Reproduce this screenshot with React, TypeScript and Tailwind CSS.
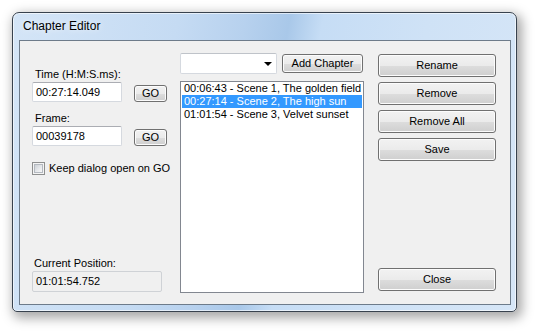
export default function App() {
  const btn =
    "flex items-center justify-center rounded-[3px] border border-[#707070] bg-[linear-gradient(#f2f2f2_0%,#ebebeb_50%,#dddddd_51%,#cfcfcf_100%)] shadow-[inset_0_0_0_1px_#fcfcfc] text-black text-[11px] leading-[13px]";
  const edit =
    "flex items-center h-[20px] rounded-[2px] border border-[#d5d9df] border-t-[#abadb3] bg-white pl-[3px] text-[11px] leading-[13px] text-black";
  return (
    <div className="w-[537px] h-[332px] bg-white pt-[12px] pl-[12px] font-['Liberation_Sans',Arial,sans-serif]">
      <div className="w-[505px] h-[300px] rounded-t-[7px] rounded-b-[5px] border border-[#38424e] bg-[linear-gradient(100deg,#d4e5f7_0%,#c5dbf3_30%,#b7d1ee_42%,#a9c8e9_50%,#c6ddf5_56%,#cfe2f6_75%,#d6e6f7_100%)] shadow-[inset_0_0_0_1px_rgba(255,255,255,0.6),3px_4px_12px_2px_rgba(0,0,0,0.35)] flex flex-col">
        <div className="h-[27px] pl-[10px] pt-[6px] text-[12px] leading-[14px] text-black [text-shadow:0_0_6px_rgba(255,255,255,0.9)]">
          Chapter Editor
        </div>
        <div className="ml-[6px] w-[492px] h-[265px] border border-[#6d7b8a] bg-[#f0f0f0] flex flex-row pl-[12px] text-[11px] leading-[13px] text-black">
          {/* Left column */}
          <div className="w-[135px] flex flex-col pt-[27px] pb-[12px]">
            <div className="h-[13px] pl-[3px]">Time (H:M:S.ms):</div>
            <div className="mt-[1px] flex items-end">
              <div className={edit + " w-[90px]"}>00:27:14.049</div>
              <div className={btn + " ml-[12px] w-[33px] h-[17px]"}>GO</div>
            </div>
            <div className="mt-[10px] h-[13px] pl-[3px]">Frame:</div>
            <div className="mt-[1px] flex items-end">
              <div className={edit + " w-[90px]"}>00039178</div>
              <div className={btn + " ml-[12px] w-[33px] h-[17px]"}>GO</div>
            </div>
            <div className="mt-[16px] flex items-center h-[13px] whitespace-nowrap">
              <div className="w-[13px] h-[13px] shrink-0 border border-[#8e8f8f] bg-[#f4f4f4] flex items-center justify-center">
                <div className="w-[9px] h-[9px] border border-[#b4b9c0] bg-[linear-gradient(135deg,#cdd1d6_0%,#e6e8eb_55%,#f8f8f8_100%)]" />
              </div>
              <span className="ml-[4px]">Keep dialog open on GO</span>
            </div>
            <div className="mt-auto h-[13px] pl-[2px]">Current Position:</div>
            <div className="mt-[1px] h-[21px] w-[130px] rounded-[2px] border border-[#cfd2d6] bg-[#f0f0f0] flex items-center pl-[3px]">
              01:01:54.752
            </div>
          </div>

          {/* Middle column */}
          <div className="ml-[13px] w-[184px] flex flex-col pt-[12px] pb-[11px]">
            <div className="flex items-center h-[21px]">
              <div className="relative w-[97px] h-[21px] rounded-[2px] border border-[#d5d9df] border-t-[#bfc3c9] bg-white">
                <div className="absolute right-[4px] top-[8px] w-0 h-0 border-l-[4px] border-r-[4px] border-t-[4px] border-l-transparent border-r-transparent border-t-black" />
              </div>
              <div className={btn + " ml-[5px] w-[81px] h-[19px]"}>Add Chapter</div>
            </div>
            <div className="mt-[7px] flex-1 border border-[#828790] bg-white px-[1px]">
              <div className="h-[13px] pl-[2px] whitespace-nowrap">00:06:43 - Scene 1, The golden field</div>
              <div className="h-[13px] pl-[2px] whitespace-nowrap bg-[#3399ff] text-white">00:27:14 - Scene 2, The high sun</div>
              <div className="h-[13px] pl-[2px] whitespace-nowrap">01:01:54 - Scene 3, Velvet sunset</div>
            </div>
          </div>

          {/* Right column */}
          <div className="ml-[14px] w-[118px] flex flex-col gap-[5px] pt-[13px] pb-[13px]">
            <div className={btn + " h-[23px]"}>Rename</div>
            <div className={btn + " h-[23px]"}>Remove</div>
            <div className={btn + " h-[23px]"}>Remove All</div>
            <div className={btn + " h-[23px]"}>Save</div>
            <div className={btn + " h-[23px] mt-auto"}>Close</div>
          </div>
        </div>
      </div>
    </div>
  );
}
